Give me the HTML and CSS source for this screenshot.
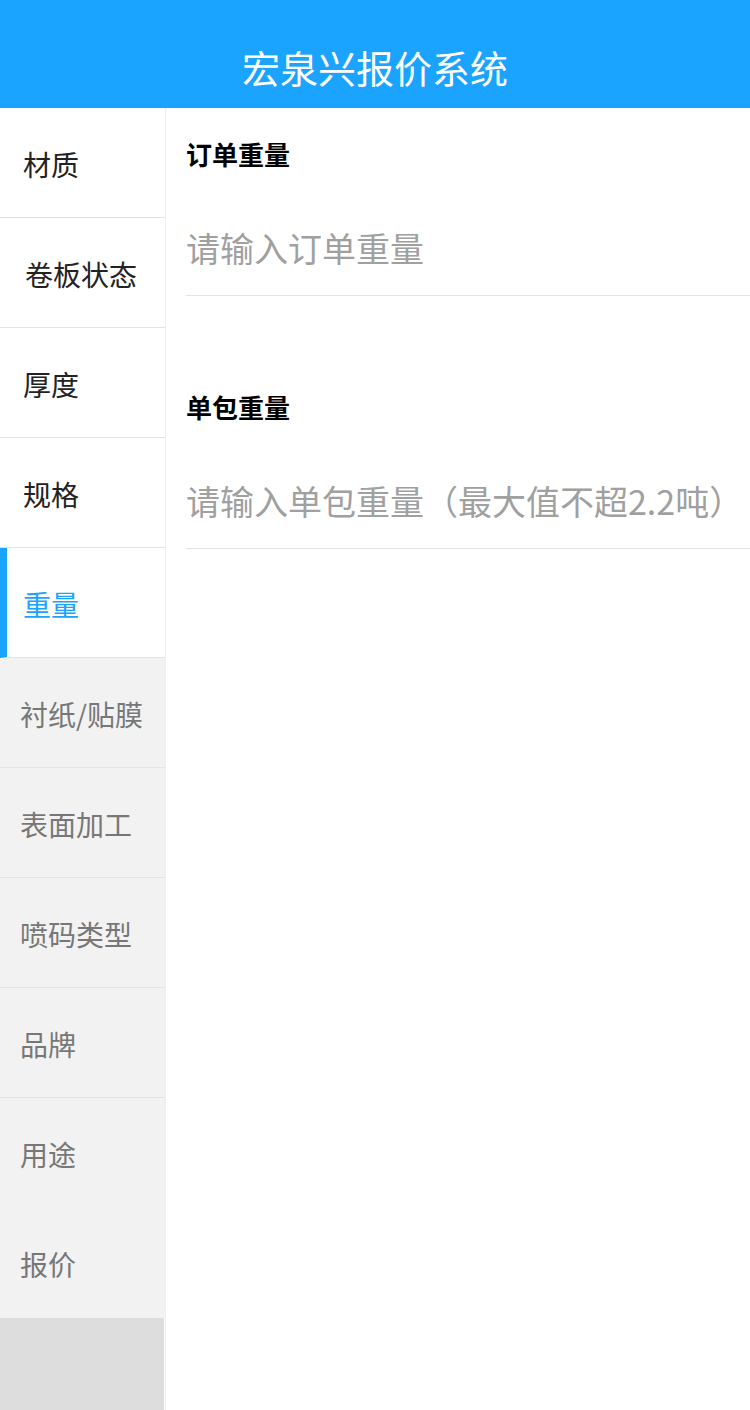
FILE: index.html
```html
<html>

<head>
    <meta charset="utf-8">
    <title>宏泉兴报价系统</title>
    <link rel="stylesheet" href="styles.css">
</head>

<body>
    <div class="header">
        <h1 class="title">宏泉兴报价系统</h1>
    </div>
    <div class="main">
        <div class="sidebar">
            <div class="navItem">材质</div>
            <div class="navItem navItem-state">卷板状态</div>
            <div class="navItem">厚度</div>
            <div class="navItem">规格</div>
            <div class="navItem active">重量</div>
            <div class="navItem pending navItem-wide">衬纸/贴膜</div>
            <div class="navItem pending">表面加工</div>
            <div class="navItem pending">喷码类型</div>
            <div class="navItem pending">品牌</div>
            <div class="navItem pending last">用途</div>
            <div class="navItem pending last">报价</div>
            <div class="filler"></div>
        </div>
        <div class="content">
            <section class="field">
                <p class="fieldLabel">订单重量</p>
                <input class="fieldInput" type="text" placeholder="请输入订单重量" />
            </section>
            <section class="field">
                <p class="fieldLabel">单包重量</p>
                <input class="fieldInput" type="text" placeholder="请输入单包重量（最大值不超2.2吨）" />
            </section>
        </div>
    </div>
</body>

</html>
```

FILE: styles.css
```css
body {
    margin: 0;
    width: 750px;
    height: 1410px;
    overflow: hidden;
    background: #fff;
    font-family: "Noto Sans CJK SC", "Noto Sans", sans-serif;
}

.header {
    height: 108px;
    background: #1aa3ff;
    box-sizing: border-box;
    padding-top: 27px;
}

.title {
    margin: 0;
    height: 80px;
    line-height: 80px;
    text-align: center;
    color: #fff;
    font-size: 38px;
    font-weight: normal;
}

.main {
    display: flex;
    height: 1302px;
}

.sidebar {
    width: 165px;
    border-right: 1px solid #eeeeee;
    display: flex;
    flex-direction: column;
}

.navItem {
    height: 109px;
    line-height: 112px;
    border-bottom: 1px solid #e3e3e3;
    padding-left: 23px;
    font-size: 28px;
    color: #222;
    background: #fff;
}

.navItem-state {
    padding-left: 25px;
}

.navItem-wide {
    padding-left: 18px;
}

.navItem.active {
    color: #1aa3ff;
    border-left: 7px solid #1aa3ff;
    padding-left: 16px;
}

.navItem.pending {
    background: #f2f2f2;
    color: #777;
    padding-left: 20px;
}

.navItem.last {
    border-bottom: none;
    height: 110px;
    line-height: 112px;
}

.filler {
    flex: 1;
    width: 164px;
    background: #dddddd;
}

.content {
    flex: 1;
    padding-left: 20px;
}

.field {
    padding-top: 25px;
    margin-bottom: 65px;
}

.fieldLabel {
    margin: 0;
    height: 42px;
    line-height: 42px;
    font-size: 26px;
    font-weight: bold;
    color: #000;
}

.fieldInput {
    display: block;
    width: 100%;
    height: 121px;
    padding: 24px 0 0;
    box-sizing: border-box;
    border: none;
    border-bottom: 1px solid #e3e3e3;
    outline: none;
    font-family: "Noto Sans CJK SC", "Noto Sans", sans-serif;
    font-size: 34px;
    color: #333;
    background: transparent;
}

.fieldInput::placeholder {
    color: #a0a0a0;
}
```
